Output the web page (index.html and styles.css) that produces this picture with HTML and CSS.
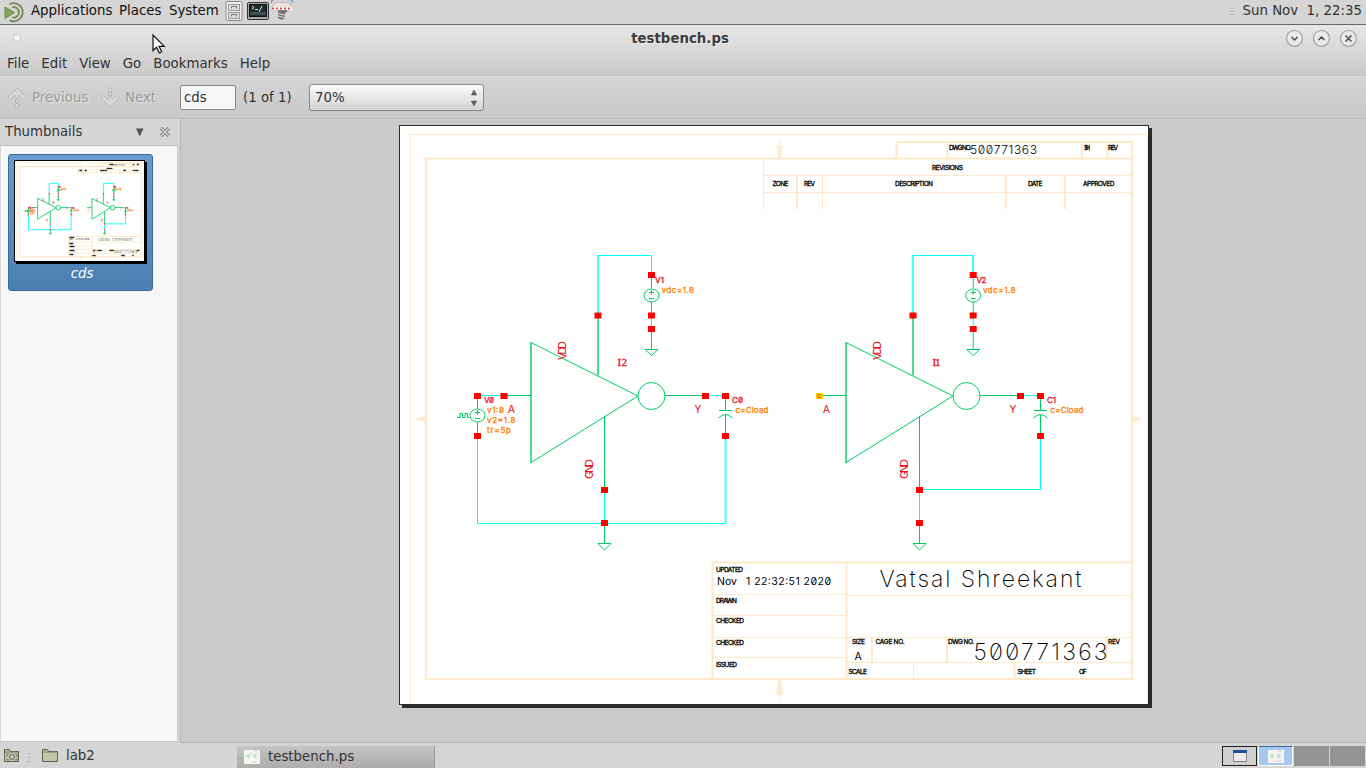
FILE: index.html
```html
<!DOCTYPE html>
<html lang="en">
<head>
<meta charset="utf-8">
<title>testbench.ps</title>
<link rel="stylesheet" href="styles.css">
</head>
<body>
<header class="panel">
  <svg class="mate" width="22" height="22" viewBox="0 0 22 22"><g fill="none" stroke="#6d8a49" stroke-width="1.7"><path d="M5.5 3.2A9 9 0 1 1 5.5 19.2"/><path d="M8.3 6.3A5.2 5.2 0 1 1 8.3 16.3"/></g><path d="M1 6l9.5 5.5L1 17.5z" fill="#83a658" stroke="#5f7b3e" stroke-width=".8"/></svg>
  <span class="apps">Applications</span><span class="places">Places</span><span class="system">System</span>
  <svg class="launch" width="70" height="23" viewBox="224 1 70 23">
    <rect x="226" y="2.500" width="16" height="19" rx="1.500" fill="#eee" stroke="#8b8b86"/><rect x="228.500" y="5.500" width="11" height="6" fill="#ddd" stroke="#999"/><rect x="228.500" y="13.500" width="11" height="6" fill="#ddd" stroke="#999"/><path d="M231.500 9.500v-2h5v2M231.500 17.500v-2h5v2" fill="none" stroke="#777"/>
    <rect x="247.500" y="3.500" width="21" height="17" rx="1" fill="#aaa" stroke="#333"/><rect x="249.500" y="5.500" width="17" height="12" fill="#1f2b2b" stroke="#111"/><path d="M252 7l2 1.500-2 1.500M255 10.500h3M262 7l-3 6" fill="none" stroke="#dfe8e5"/><path d="M250 13h16v3h-16z" fill="#405050"/>
    <path d="M278 11h9v2l-2 1v5l-3 2-4-2v-5z" fill="#777"/><path d="M278 14.500l8 2M278 17l8 2" stroke="#ddd"/><path d="M275 3.500h14l3 5h-20z" fill="#e9e2df" stroke="#c8bcb8"/><path d="M272 9.500h20" stroke="#fff" stroke-width="3"/><path d="M272 9.500h20" stroke="#db4b4b" stroke-width="2" stroke-dasharray="2 2"/><path d="M271.500 4V1.500h2M292.500 4V1.500h-2" fill="none" stroke="#6d9bc9"/>
  </svg>
  <i class="grip"></i><time>Sun Nov&nbsp; 1, 22:35</time>
</header>
<section class="head">
  <div class="titlebar"><i class="dot"></i><h1>testbench.ps</h1>
    <svg class="winbtns" width="76" height="20" viewBox="1284 27 76 20"><g fill="#e9e9e9" stroke="#a9a9a9" stroke-width="1.3"><circle cx="1294.500" cy="37.300" r="8"/><circle cx="1321.500" cy="37.300" r="8"/><circle cx="1348.500" cy="37.300" r="8"/></g><g fill="none" stroke="#4a4a4a" stroke-width="1.500"><path d="M1291.500 36l3 3 3-3M1318.500 39l3-3 3 3M1345.500 34.500l6 6M1351.500 34.500l-6 6"/></g></svg>
  </div>
  <nav class="menu"><span>File</span><span>Edit</span><span>View</span><span>Go</span><span>Bookmarks</span><span>Help</span></nav>
</section>
<section class="toolbar">
  <svg class="nav" width="20" height="22" viewBox="0 0 20 22"><path d="M1 10l9-9 9 9-2.500 2.500L12 8v3H8V8l-4.500 4.500z" fill="#d8d8d8" stroke="#b9b9b9"/><circle cx="10" cy="14" r="1.700" fill="#ddd" stroke="#b5b5b5"/><circle cx="10" cy="18.500" r="2" fill="#ddd" stroke="#b5b5b5"/></svg>
  <span class="off prev">Previous</span>
  <svg class="nav" width="20" height="22" viewBox="0 0 20 22"><path d="M1 11l2.500-2.500L8 13v-3h4v3l4.500-4.500L19 11l-9 9z" fill="#d8d8d8" stroke="#b9b9b9"/><circle cx="10" cy="7" r="1.700" fill="#ddd" stroke="#b5b5b5"/><circle cx="10" cy="2.800" r="2" fill="#ddd" stroke="#b5b5b5"/></svg>
  <span class="off next">Next</span>
  <span class="entry">cds</span><span class="count">(1 of 1)</span>
  <span class="combo">70%<svg width="6" height="18" viewBox="0 0 6 18"><path d="M.3 6L3 1l2.700 5zM.3 12L3 17l2.700-5z" fill="#666" stroke="#444" stroke-width=".5"/></svg></span>
</section>
<main class="body">
  <aside class="side">
    <div class="sidehead"><span>Thumbnails</span><svg width="36" height="12" viewBox="135 126 36 12"><path d="M136 128.500h7.500l-3.700 8z" fill="#555"/><path d="M161 128l8 8M169 128l-8 8" stroke="#888" stroke-width="3.600"/><path d="M161 128l8 8M169 128l-8 8" stroke="#d0d0d0" stroke-width="1.400"/></svg></div>
    <div class="list"><div class="item"><div class="thumbpage"><svg width="129" height="100" viewBox="400 126 748 578" preserveAspectRatio="none"><use href="#sheet"/></svg></div><em>cds</em></div></div>
  </aside>
  <div class="split"></div>
  <div class="canvas"><div class="page">
  <svg width="748" height="578" viewBox="400 126 748 578">
    <defs>
      <g id="src"><path class="g" d="M651.500 277v11M651.500 302v12M651.500 332v17M645 349.500h13l-6.500 6zM649 292.500h5M651.500 290v5M649 298.500h5"/><path class="c" d="M651.500 318v9"/><ellipse class="g" cx="651.500" cy="295.500" rx="7.500" ry="6.500"/><path class="r" d="M648 272h7v6h-7zM648 312.500h7v6h-7zM648 326h7v6h-7z"/></g>
      <g id="inv"><path class="g" d="M531 342.500L638 396L531 462.500M504 395.500h27M665 395.500h40M604.500 416v71"/><path class="g soft" d="M531 342v121M598 315v60"/><circle class="g" cx="651.500" cy="396" r="13.500"/><path class="c" d="M708 395.500h15"/><path class="g" d="M725.500 399v11.500M719 410.500h13M718.500 418q7-7 14 0M725.500 415v18"/><path class="r" d="M594.500 312.500h7v6h-7zM702 393h7v6h-7zM722 393h7v6h-7zM722 433h7v6h-7z"/>
        <text class="tr" x="508" y="413" textLength="7" font-size="10">A</text><text class="tr" x="694.500" y="413" textLength="6.500" font-size="10">Y</text><text class="tr" transform="translate(565.500 360) rotate(-90)" font-size="11" textLength="19">VDD</text><text class="tr" transform="translate(592.500 479) rotate(-90)" font-size="11" textLength="20">GND</text><text class="to" x="735.500" y="413" textLength="33">c=Cload</text></g>
      <g id="gnd"><path class="g" d="M604.500 526v17M598 543.500h13l-6.500 6.500z"/><path class="c" d="M604.500 493v27"/><path class="r" d="M601 487h7v6h-7zM601 520h7v6h-7z"/></g>
    </defs>
    <g id="sheet">
      <path class="f" d="M410.500 704V134.500H1148M1147.500 134.500V704M763.500 159v50M764 175.500h368M764 192.500h368M822.500 176v33M713 594.500h133M713 615.500h133M713 637.500h133M713 657.500h133M847 595.500h285M847 637.500h285M847 662.500h285M913.500 663v16"/>
      <path class="f wide" d="M426 680V158.500H1132V679H426M896.500 158V142H1132V158M947.500 143v15M1082 143v15M1107.500 143v15M797 176v33M1006 176v33M1065 176v33M712.500 680V562.500H1132M846.500 563v116M872 638v25M947 638v25M1106.500 638v25M1014.500 663v16"/>
      <path class="f" fill="#ffecd0" d="M779.500 141v4M777 146h5l-2 12h-1zM778.500 681h2l2 13h-6zM779.500 694v4M415 419h2M417 419l8-2v4zM1132 419l2-2 6 1v2l-6 1z"/>
      <path class="c" d="M651.500 272V255.500H598M480 395.500h21M477.500 439v84.500H725M973 255.500h-60M922 489.500h118.500V439"/>
      <path class="c soft" d="M598 255v58M725.500 439v85M913 255v58M973 255v17"/>
      <use href="#inv"/><use href="#inv" x="315"/><use href="#src"/><use href="#src" x="321.700"/><use href="#gnd"/><use href="#gnd" x="315"/>
      <path class="g" d="M477.500 399v10M477.500 422v12M475 412.500h5M477.500 410v5M475 418.500h5M457 417.500h3v-4h2.500v4h2.500v-4h2.500v4h2"/><ellipse class="g" cx="477.500" cy="415.500" rx="7.500" ry="6.500"/>
      <path class="r" d="M474 393h7v6h-7zM500.500 393h7v6h-7zM474 433h7v6h-7z"/>
      <rect x="816" y="393" width="7" height="6" fill="#fc0"/><path d="M821 394.500h-3v3h3" fill="none" stroke="#e77300"/>
      <text class="tr" x="484" y="403" textLength="10">V0</text><text class="tr" x="655" y="282.500" textLength="9">V1</text><text class="tr" x="976.500" y="282.500" textLength="10">V2</text><text class="tr" x="732" y="403" textLength="11">C0</text><text class="tr" x="1047" y="403" textLength="9">C1</text>
      <text class="tr serif" x="617.500" y="366" textLength="9.500">I2</text><text class="tr serif" x="932.500" y="366" textLength="8">I1</text>
      <text class="to" x="661.500" y="292.500" textLength="32.500">vdc=1.8</text><text class="to" x="983" y="292.500" textLength="32.500">vdc=1.8</text>
      <text class="to" x="487" y="413" textLength="17">v1:0</text><text class="to" x="487" y="423" textLength="28.500">v2=1.8</text><text class="to" x="487" y="433" textLength="24">tr=5p</text>
      <g class="tiny">
        <text x="949" y="149.500" textLength="22">DWG NO.</text><text x="1084" y="149.500" textLength="6">SH</text><text x="1108" y="149.500" textLength="10">REV</text>
        <text x="932" y="169.500" textLength="31">REVISIONS</text><text x="772.500" y="186" textLength="16">ZONE</text><text x="804" y="186" textLength="11">REV</text><text x="895" y="186" textLength="38">DESCRIPTION</text><text x="1028" y="186" textLength="14.500">DATE</text><text x="1083" y="186" textLength="31.500">APPROVED</text>
        <text x="716" y="571.500" textLength="27">UPDATED</text><text x="716" y="603" textLength="21">DRAWN</text><text x="716" y="623" textLength="28">CHECKED</text><text x="716" y="644.500" textLength="28">CHECKED</text><text x="716" y="666.500" textLength="21">ISSUED</text>
        <text x="852" y="644" textLength="13">SIZE</text><text x="875.500" y="644" textLength="29">CAGE NO.</text><text x="948" y="644" textLength="26">DWG NO.</text><text x="1108" y="644" textLength="12">REV</text><text x="848.500" y="673.500" textLength="18.500">SCALE</text><text x="1017.500" y="673.500" textLength="18.500">SHEET</text><text x="1079" y="673.500" textLength="7.500">OF</text>
      </g>
      <text class="mid" x="717" y="585" textLength="20">Nov</text><text class="mid" x="746" y="585" textLength="85">1 22:32:51 2020</text><text class="mid" x="854.500" y="660" textLength="8.500" font-size="11">A</text>
      <text class="num" x="970" y="154" textLength="67">500771363</text>
      <text class="big" x="879.500" y="587" textLength="202">Vatsal Shreekant</text><text class="big" x="973.500" y="660" textLength="134">500771363</text>
    </g>
  </svg></div></div>
</main>
<footer class="taskbar">
  <svg width="60" height="24" viewBox="0 744 60 24"><g fill="#c2c4ab" stroke="#5e6350"><path d="M4.500 761V749.500h5l1 2h8v10h-14z"/><path d="M42.500 761V749.500h5l1 2h9v10h-15z"/></g><path d="M5 752h13M43 752h14" stroke="#747b62"/><circle cx="12" cy="757" r="2.500" fill="none" stroke="#666b59"/><path d="M7 757v-3h2M17 757v-3h-2M7 758v2h2M17 758v2h-2" fill="none" stroke="#7b806d"/><path d="M27 753.500h4M27 757.500h4M27 761.500h4" stroke="#bbb"/></svg>
  <span class="lab">lab2</span>
  <div class="task"><svg width="16" height="14" viewBox="0 0 16 14"><rect width="16" height="14" rx="1" fill="#f7f5ee"/><path d="M2 6l3-2v4zM9 6l3-2v4zM6 3h2M13 3h1" fill="#bfe8d4" stroke="#b5e2ce"/><path d="M8 12h6M11 1h3" stroke="#c9c2b6" stroke-dasharray="2 1"/></svg>testbench.ps</div>
  <div class="spaces"><div class="ws one"><svg width="14" height="12" viewBox="0 0 14 12"><rect x=".5" y=".5" width="13" height="11" fill="#ececec" stroke="#888"/><path d="M0 0h14v3H0z" fill="#204f9b"/></svg></div><div class="ws active"><svg width="16" height="13" viewBox="0 0 16 13"><rect width="16" height="13" fill="#f5f3eb"/><path d="M2 6l3-2v4zM9 6l3-2v4z" fill="#bfe8d4" stroke="#b5e2ce"/><path d="M8 11h6M11 1.500h3" stroke="#c9c2b6" stroke-dasharray="2 1"/></svg></div><div class="ws"></div><div class="ws"></div></div>
</footer>
<svg class="pointer" width="14" height="21" viewBox="0 0 14 21"><path d="M1 1v15.500l3.500-3.300 2.800 5.800 2.400-1.200L7 12.300h5.200z" fill="#fff" stroke="#111" stroke-width="1.200"/></svg>
</body>
</html>
```
FILE: styles.css
```css
* { box-sizing: border-box; }
body { margin: 0; width: 1366px; height: 768px; overflow: hidden; display: flex; flex-direction: column; background: #d5d5d5; color: #333; font: 13.33px/16px "DejaVu Sans", sans-serif; white-space: nowrap; }
svg { display: block; flex: none; }
.panel { height: 25px; border-bottom: 1px solid #666; display: flex; align-items: center; padding: 0 4px 2px; color: #111; }
.mate { margin-top: 2px; }
.apps { width: 88px; margin-left: 5px; }
.places { width: 50px; }
.system { width: 55px; }
.grip { margin-left: auto; width: 4px; height: 7px; margin-right: 9px; background: repeating-linear-gradient(#bbb 0 1px, transparent 1px 3px); }
.panel time { color: #333; }
.head { height: 51px; background: linear-gradient(#e7e7e7, #cacaca); border-bottom: 1px solid #c1c1c1; }
.titlebar { height: 28px; padding: 2px 6px 0 13px; display: flex; align-items: center; }
.dot { width: 8px; height: 8px; border-radius: 50%; background: #f6f6f6; border: 1px solid #c5c5c5; margin-top: -5px; }
h1 { flex: 1; margin: -2px 0 0; padding-left: 55px; text-align: center; font-size: 13.33px; line-height: 16px; color: #3c3c3c; text-shadow: 1px 1px #eee; }
.winbtns { margin-top: -4px; }
.menu { display: flex; gap: 12px; padding: 3px 0 0 7px; }
.toolbar { height: 43px; background: linear-gradient(#d5d5d5, #c8c8c8); border-top: 1px solid #d9d9d9; border-bottom: 1px solid #bcbcbc; display: flex; align-items: center; padding-left: 7px; }
.off { color: #9b9b9b; text-shadow: 1px 1px #e3e3e3; }
.prev { width: 68px; margin-left: 5px; }
.next { width: 55px; margin-left: 5px; }
.entry { width: 56px; height: 25px; padding: 4px 3px; border: 1px solid #888; border-radius: 2px; background: #f7f7f7; }
.count { width: 66px; margin-left: 7px; }
.combo { width: 175px; height: 27px; display: flex; justify-content: space-between; align-items: center; padding: 0 6px 0 5px; border: 1px solid #888; border-radius: 3px; background: linear-gradient(#fbfbfb, #d3d3d3); }
.body { height: 624px; display: flex; background: #d5d5d5; }
.side { width: 178px; }
.sidehead { height: 27px; display: flex; justify-content: space-between; align-items: center; padding: 0 7px 0 5px; border-bottom: 1px solid #c2c2c2; }
.list { height: 596px; margin-left: 1px; padding: 8px 7px; background: #f7f7f7; border-right: 1px solid #ccc; border-bottom: 1px solid #c2c2c2; }
.item { width: 145px; height: 137px; border: 1px solid #3e6b98; border-radius: 3px; background: linear-gradient(#689acf, #4b7fb2); padding: 5px; color: #fff; }
.thumbpage { width: 131px; height: 102px; border: 1px solid #000; background: #fff; box-shadow: 2px 2px #000; overflow: hidden; --thin: 5px; --soft: 7px; --ink: 1.5px; }
.item em { display: block; text-align: center; margin-top: 4px; padding-left: 3px; }
.split { width: 3px; border-right: 1px solid #b5b5b5; }
.canvas { flex: 1; background: #cacaca; border-bottom: 1px solid #b5b5b5; padding: 6px 0 0 218px; }
.page { width: 750px; height: 580px; border: 1px solid #2b2b2b; background: #fff; box-shadow: 3px 3px #2b2b2b; --thin: 1px; --soft: 2px; --ink: .3px; }
.f { fill: none; stroke: #ffe9c8; stroke-width: var(--thin); }
.f[fill] { fill: #ffecd0; }
.wide { stroke-width: var(--soft); }
.g { fill: none; stroke: #0c6; stroke-width: var(--thin); }
.c { fill: none; stroke: #0ff; stroke-width: var(--thin); }
.soft { stroke-width: var(--soft); opacity: .7; }
.r { fill: #f00; }
text { font-family: Inter, "Liberation Sans", sans-serif; font-feature-settings: "zero"; stroke-width: var(--ink); }
.tr { fill: #e8101c; stroke: #e8101c; font-size: 8px; }
.tr[font-size="10"] { font-size: 10px; stroke-width: .1px; }
.tr[font-size="11"] { font-size: 11px; stroke-width: .1px; }
.serif { font-family: "Liberation Serif", serif; font-size: 11px; }
.to { fill: #ff8000; stroke: #ff8000; font-size: 8px; }
.tiny text { font-size: 6.500px; stroke: #000; }
.mid { font-size: 10.500px; }
.num { font-size: 12px; font-weight: 300; }
.big { font-size: 23px; font-weight: 200; }
.thumbpage .big { stroke: #000; }
.taskbar { height: 25px; display: flex; align-items: center; padding-top: 1px; }
.lab { width: 171px; margin-left: 6px; }
.task { width: 198px; height: 22px; margin-top: 2px; display: flex; align-items: center; gap: 8px; padding-left: 7px; background: linear-gradient(#c5c5c5, #acacac); border-right: 1px solid #999; }
.spaces { margin-left: auto; display: flex; gap: 1px; padding-right: 1px; }
.ws { width: 35px; height: 20px; background: #949494; display: flex; align-items: center; justify-content: center; }
.one { background: #d0d0d0; border: 1px solid #222; }
.active { background: #a4c8ef; border: 1px solid #fff; border-top: 1px solid #3b6a9c; }
.pointer { position: absolute; left: 152px; top: 34px; }
```
